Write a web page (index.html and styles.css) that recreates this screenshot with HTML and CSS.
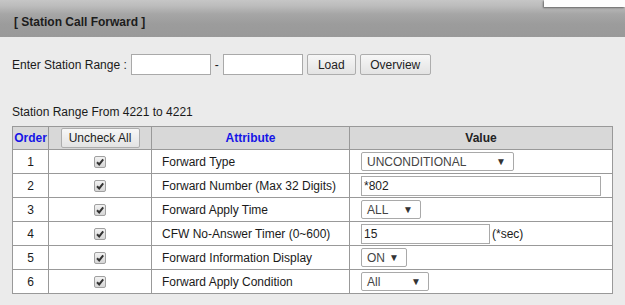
FILE: index.html
```html
<!DOCTYPE html>
<html lang="en">
<head>
    <meta charset="UTF-8">
    <meta name="viewport" content="width=device-width, initial-scale=1.0">
    <title>Station Call Forward</title>
    <link rel="stylesheet" href="styles.css">
</head>
<body>
    <div class="header">
        <div class="topstrip">
            <div class="tab"></div>
        </div>
        <div class="title">[ Station Call Forward ]</div>
    </div>

    <div class="content">
        <div class="range-row">
            <span>Enter Station Range :</span>
            <input type="text" class="range-input">
            <span>-</span>
            <input type="text" class="range-input">
            <button class="btn btn-load">Load</button>
            <button class="btn btn-overview">Overview</button>
        </div>

        <div class="range-info">Station Range From 4221 to 4221</div>

        <table class="grid">
            <colgroup>
                <col class="col-order">
                <col class="col-check">
                <col class="col-attr">
                <col class="col-value">
            </colgroup>
            <tr class="head">
                <th class="blue">Order</th>
                <th><button class="btn btn-uncheck">Uncheck All</button></th>
                <th class="blue">Attribute</th>
                <th>Value</th>
            </tr>
            <tr>
                <td class="num">1</td>
                <td class="chk"><span class="check"><svg width="10" height="10" viewBox="0 0 10 10"><path d="M2 5.2 L4.2 7.4 L8.2 2.4" fill="none" stroke="#333" stroke-width="2"/></svg></span></td>
                <td class="attr">Forward Type</td>
                <td class="val"><span class="select sel-type"><span>UNCONDITIONAL</span><span class="arrow">&#9660;</span></span></td>
            </tr>
            <tr>
                <td class="num">2</td>
                <td class="chk"><span class="check"><svg width="10" height="10" viewBox="0 0 10 10"><path d="M2 5.2 L4.2 7.4 L8.2 2.4" fill="none" stroke="#333" stroke-width="2"/></svg></span></td>
                <td class="attr">Forward Number (Max 32 Digits)</td>
                <td class="val"><input type="text" class="field field-number" value="*802"></td>
            </tr>
            <tr>
                <td class="num">3</td>
                <td class="chk"><span class="check"><svg width="10" height="10" viewBox="0 0 10 10"><path d="M2 5.2 L4.2 7.4 L8.2 2.4" fill="none" stroke="#333" stroke-width="2"/></svg></span></td>
                <td class="attr">Forward Apply Time</td>
                <td class="val"><span class="select sel-time"><span>ALL</span><span class="arrow">&#9660;</span></span></td>
            </tr>
            <tr>
                <td class="num">4</td>
                <td class="chk"><span class="check"><svg width="10" height="10" viewBox="0 0 10 10"><path d="M2 5.2 L4.2 7.4 L8.2 2.4" fill="none" stroke="#333" stroke-width="2"/></svg></span></td>
                <td class="attr">CFW No-Answer Timer (0~600)</td>
                <td class="val"><input type="text" class="field field-timer" value="15"><span class="unit">(*sec)</span></td>
            </tr>
            <tr>
                <td class="num">5</td>
                <td class="chk"><span class="check"><svg width="10" height="10" viewBox="0 0 10 10"><path d="M2 5.2 L4.2 7.4 L8.2 2.4" fill="none" stroke="#333" stroke-width="2"/></svg></span></td>
                <td class="attr">Forward Information Display</td>
                <td class="val"><span class="select sel-display"><span>ON</span><span class="arrow">&#9660;</span></span></td>
            </tr>
            <tr>
                <td class="num">6</td>
                <td class="chk"><span class="check"><svg width="10" height="10" viewBox="0 0 10 10"><path d="M2 5.2 L4.2 7.4 L8.2 2.4" fill="none" stroke="#333" stroke-width="2"/></svg></span></td>
                <td class="attr">Forward Apply Condition</td>
                <td class="val"><span class="select sel-cond"><span>All</span><span class="arrow">&#9660;</span></span></td>
            </tr>
        </table>
    </div>
</body>
</html>
```

FILE: styles.css
```css
body {
    margin: 0;
    padding: 0;
    font-family: "Liberation Sans", Arial, sans-serif;
    font-size: 12px;
    color: #1a1a1a;
    background-color: #ebebeb;
}
.header {
    height: 37px;
    background: linear-gradient(#c6c6c6 0, #bcbcbc 6px, #a6a6a6 14px, #9c9c9c 24px, #999 100%);
}
.topstrip {
    height: 8px;
    display: flex;
    justify-content: flex-end;
}
.tab {
    width: 81px;
    height: 7px;
    background-color: #fdfdfd;
    box-shadow: -1px 1px 2px rgba(0, 0, 0, 0.45);
}
.title {
    padding-left: 14px;
    line-height: 29px;
    font-weight: bold;
    color: #1c1c1c;
}
.content {
    padding: 17px 12px 0 12px;
}
.range-row {
    display: flex;
    align-items: center;
    gap: 4px;
    height: 21px;
}
.range-input {
    width: 80px;
    height: 21px;
    box-sizing: border-box;
    border: 1px solid #a9a9a9;
    background: #fff;
    margin: 0;
    padding: 0 2px;
}
.btn {
    height: 21px;
    box-sizing: border-box;
    margin: 0;
    padding: 0;
    font-family: "Liberation Sans", Arial, sans-serif;
    font-size: 12px;
    color: #222;
    background: linear-gradient(#f7f7f7, #e3e3e3);
    border: 1px solid #adadad;
    border-radius: 2px;
}
.btn-load {
    width: 49px;
}
.btn-overview {
    width: 71px;
}
.range-info {
    margin-top: 30px;
    line-height: 14px;
}
.grid {
    margin-top: 7px;
    width: 600px;
    border-collapse: collapse;
    table-layout: fixed;
    background-color: #fff;
}
.col-order { width: 36px; }
.col-check { width: 103px; }
.col-attr { width: 198px; }
.col-value { width: 263px; }
.grid th,
.grid td {
    border: 1px solid #999;
    padding: 0;
}
.grid th {
    height: 22px;
    background-color: #d8d8d8;
    font-weight: bold;
    color: #222;
    text-align: center;
}
.grid th.blue {
    color: #1515e6;
}
.btn-uncheck {
    width: 79px;
    height: 20px;
    display: block;
    margin: 0 auto;
}
.grid td {
    height: 23px;
}
.num {
    text-align: center;
}
.chk {
    text-align: center;
}
.check {
    display: inline-flex;
    align-items: center;
    justify-content: center;
    width: 12px;
    height: 12px;
    box-sizing: border-box;
    vertical-align: middle;
    border: 1px solid #a0a0a0;
    border-radius: 2px;
    background: linear-gradient(#f2f2f2, #d6d6d6);
}
.attr {
    padding-left: 10px !important;
}
.val {
    padding-left: 11px !important;
}
.select {
    display: inline-flex;
    align-items: center;
    justify-content: space-between;
    height: 19px;
    box-sizing: border-box;
    padding: 0 7px 0 5px;
    vertical-align: middle;
    border: 1px solid #a9a9a9;
    border-radius: 2px;
    background: #fff;
    color: #444;
}
.arrow {
    font-size: 10px;
    color: #333;
}
.sel-type { width: 153px; }
.sel-time { width: 60px; }
.sel-display { width: 46px; }
.sel-cond { width: 68px; }
.field {
    height: 20px;
    box-sizing: border-box;
    margin: 0;
    padding: 0 2px;
    vertical-align: middle;
    border: 1px solid #a9a9a9;
    background: #fff;
    font-family: "Liberation Sans", Arial, sans-serif;
    font-size: 12px;
    color: #222;
}
.field-number { width: 240px; }
.field-timer { width: 129px; }
.unit {
    margin-left: 2px;
    vertical-align: middle;
}
```
